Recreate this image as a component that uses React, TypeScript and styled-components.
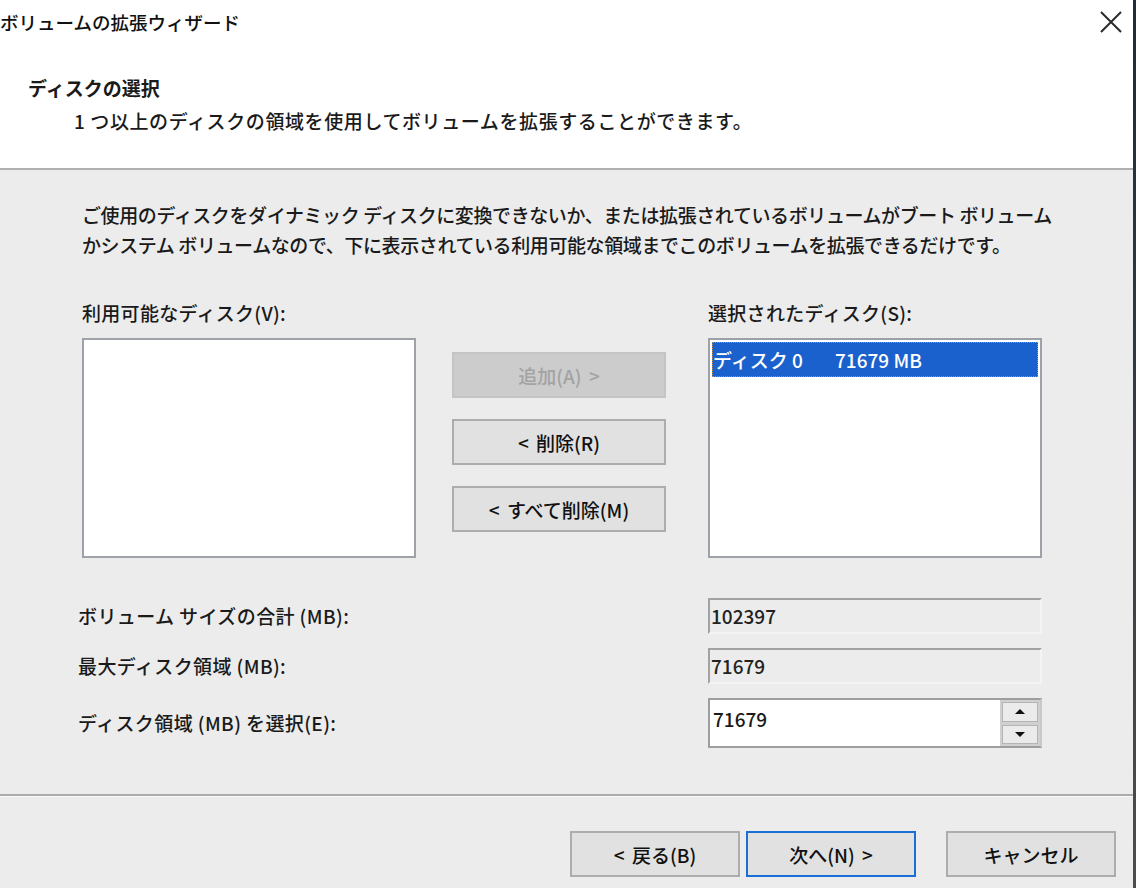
import React from 'react';
import styled, { createGlobalStyle } from 'styled-components';

const GlobalStyle = createGlobalStyle`
    html, body {
        margin: 0;
        padding: 0;
        background: #ececec;
    }
    body {
        font-family: "Noto Sans CJK JP", "Noto Sans", sans-serif;
        font-weight: 500;
        color: #1a1a1a;
        overflow: hidden;
    }
`;

const Screen = styled.div`
    display: flex;
    width: 1136px;
    height: 888px;
    overflow: hidden;
`;

const Dialog = styled.div`
    flex: 1;
    display: flex;
    flex-direction: column;
    background: #ececec;
`;

const Edge = styled.div`
    width: 3px;
    background: linear-gradient(#1f2b38, #4d4d4d);
`;

const TitleBar = styled.div`
    height: 44px;
    display: flex;
    align-items: center;
    justify-content: space-between;
    background: #fff;
    padding: 0 8px 0 0;
    font-size: 18.5px;
    color: #111;
`;

const CloseButton = styled.div`
    width: 28px;
    height: 28px;
    display: flex;
    align-items: center;
    justify-content: center;
`;

const Header = styled.div`
    background: #fff;
    padding: 29px 0 32px 28px;
    border-bottom: 2px solid #b0b0b0;
`;

const Heading = styled.div`
    font-size: 19px;
    font-weight: 700;
    line-height: 30px;
`;

const SubTitle = styled.div`
    font-size: 19px;
    line-height: 30px;
    letter-spacing: 0.6px;
    margin: 3px 0 0 46px;
`;

const Body = styled.div`
    padding: 30px 0 0 82px;
    font-size: 19px;
`;

const Paragraph = styled.p`
    margin: 0;
    line-height: 30px;
    letter-spacing: -0.4px;
`;

const Pickers = styled.div`
    display: flex;
    margin-top: 38px;
`;

const Column = styled.div`
    display: flex;
    flex-direction: column;
    width: 334px;
`;

const FieldLabel = styled.div`
    line-height: 30px;
    margin-bottom: 10px;
    letter-spacing: 0.3px;
`;

const ListBox = styled.div`
    height: 220px;
    box-sizing: border-box;
    background: #fff;
    border: 2px solid #9ea2a8;
    padding: 2px;
`;

const ListItem = styled.div`
    display: flex;
    height: 35px;
    align-items: center;
    background: #1b61cd;
    color: #fff;
    outline: 1px dotted #c88a3a;
    outline-offset: -1px;
    padding-left: 1px;
    span:first-child {
        width: 122px;
    }
`;

const ButtonColumn = styled.div`
    display: flex;
    flex-direction: column;
    gap: 21px;
    width: 214px;
    margin: 54px 42px 0 36px;
`;

const Button = styled.button<{ $disabled?: boolean; $default?: boolean }>`
    height: 46px;
    box-sizing: border-box;
    font-family: inherit;
    font-weight: 500;
    font-size: 19px;
    word-spacing: 3px;
    padding: 0;
    background: ${(p) => (p.$disabled ? '#cccccc' : '#e1e1e1')};
    color: ${(p) => (p.$disabled ? '#a3a3a3' : '#111')};
    border: 2px solid
        ${(p) => (p.$default ? '#1a6fd6' : p.$disabled ? '#c4c4c4' : '#adadad')};
`;

const Form = styled.div`
    display: grid;
    grid-template-columns: 630px 334px;
    align-items: center;
    row-gap: 14px;
    margin: 40px 0 0 -4px;
`;

const RowLabel = styled.div`
    line-height: 30px;
    letter-spacing: 0.4px;
`;

const ReadOnlyField = styled.div`
    height: 36px;
    box-sizing: border-box;
    display: flex;
    align-items: center;
    padding: 0 0 2px 1px;
    border: 2px solid #f4f4f4;
    border-top-color: #a2a2a2;
    border-left-color: #a2a2a2;
    color: #222;
`;

const SpinBox = styled.div`
    height: 50px;
    box-sizing: border-box;
    display: flex;
    border: 2px solid #9e9e9e;
    border-right-color: #c8c8c8;
    background: #fff;
`;

const SpinValue = styled.div`
    flex: 1;
    display: flex;
    align-items: center;
    padding: 0 0 10px 3px;
`;

const SpinButtons = styled.div`
    width: 36px;
    display: flex;
    flex-direction: column;
    gap: 3px;
    padding: 2px;
    background: #d0d0d0;
`;

const SpinArrow = styled.div<{ $down?: boolean }>`
    flex: 1;
    display: flex;
    align-items: center;
    justify-content: center;
    background: #ebebeb;
    border: 1px solid #b4b4b4;
    &::after {
        content: '';
        border-left: 5px solid transparent;
        border-right: 5px solid transparent;
        ${(p) =>
            p.$down ? 'border-top: 5px solid #111;' : 'border-bottom: 5px solid #111;'}
    }
`;

const Separator = styled.div`
    margin-top: 46px;
    height: 2px;
    background: #ababab;
    border-bottom: 1px solid #f8f8f8;
`;

const Footer = styled.div`
    display: flex;
    justify-content: flex-end;
    padding: 34px 17px 0 0;
`;

const FooterButton = styled(Button)<{ $gap?: number }>`
    width: 170px;
    margin-left: ${(p) => p.$gap ?? 0}px;
`;

export default function App() {
    return (
        <Screen>
            <GlobalStyle />
            <Dialog>
                <TitleBar>
                    <span>ボリュームの拡張ウィザード</span>
                    <CloseButton>
                        <svg width="22" height="22" viewBox="0 0 22 22">
                            <path d="M1 1 L21 21 M21 1 L1 21" stroke="#2b2b2b" strokeWidth="2" />
                        </svg>
                    </CloseButton>
                </TitleBar>
                <Header>
                    <Heading>ディスクの選択</Heading>
                    <SubTitle>1 つ以上のディスクの領域を使用してボリュームを拡張することができます。</SubTitle>
                </Header>
                <Body>
                    <Paragraph>
                        ご使用のディスクをダイナミック ディスクに変換できないか、または拡張されているボリュームがブート ボリューム
                        <br />
                        かシステム ボリュームなので、下に表示されている利用可能な領域までこのボリュームを拡張できるだけです。
                    </Paragraph>
                    <Pickers>
                        <Column>
                            <FieldLabel>利用可能なディスク(V):</FieldLabel>
                            <ListBox />
                        </Column>
                        <ButtonColumn>
                            <Button $disabled>追加(A) &gt;</Button>
                            <Button>&lt; 削除(R)</Button>
                            <Button>&lt; すべて削除(M)</Button>
                        </ButtonColumn>
                        <Column>
                            <FieldLabel>選択されたディスク(S):</FieldLabel>
                            <ListBox>
                                <ListItem>
                                    <span>ディスク 0</span>
                                    <span>71679 MB</span>
                                </ListItem>
                            </ListBox>
                        </Column>
                    </Pickers>
                    <Form>
                        <RowLabel>ボリューム サイズの合計 (MB):</RowLabel>
                        <ReadOnlyField>102397</ReadOnlyField>
                        <RowLabel>最大ディスク領域 (MB):</RowLabel>
                        <ReadOnlyField>71679</ReadOnlyField>
                        <RowLabel>ディスク領域 (MB) を選択(E):</RowLabel>
                        <SpinBox>
                            <SpinValue>71679</SpinValue>
                            <SpinButtons>
                                <SpinArrow />
                                <SpinArrow $down />
                            </SpinButtons>
                        </SpinBox>
                    </Form>
                </Body>
                <Separator />
                <Footer>
                    <FooterButton>&lt; 戻る(B)</FooterButton>
                    <FooterButton $default $gap={6}>次へ(N) &gt;</FooterButton>
                    <FooterButton $gap={30}>キャンセル</FooterButton>
                </Footer>
            </Dialog>
            <Edge />
        </Screen>
    );
}
